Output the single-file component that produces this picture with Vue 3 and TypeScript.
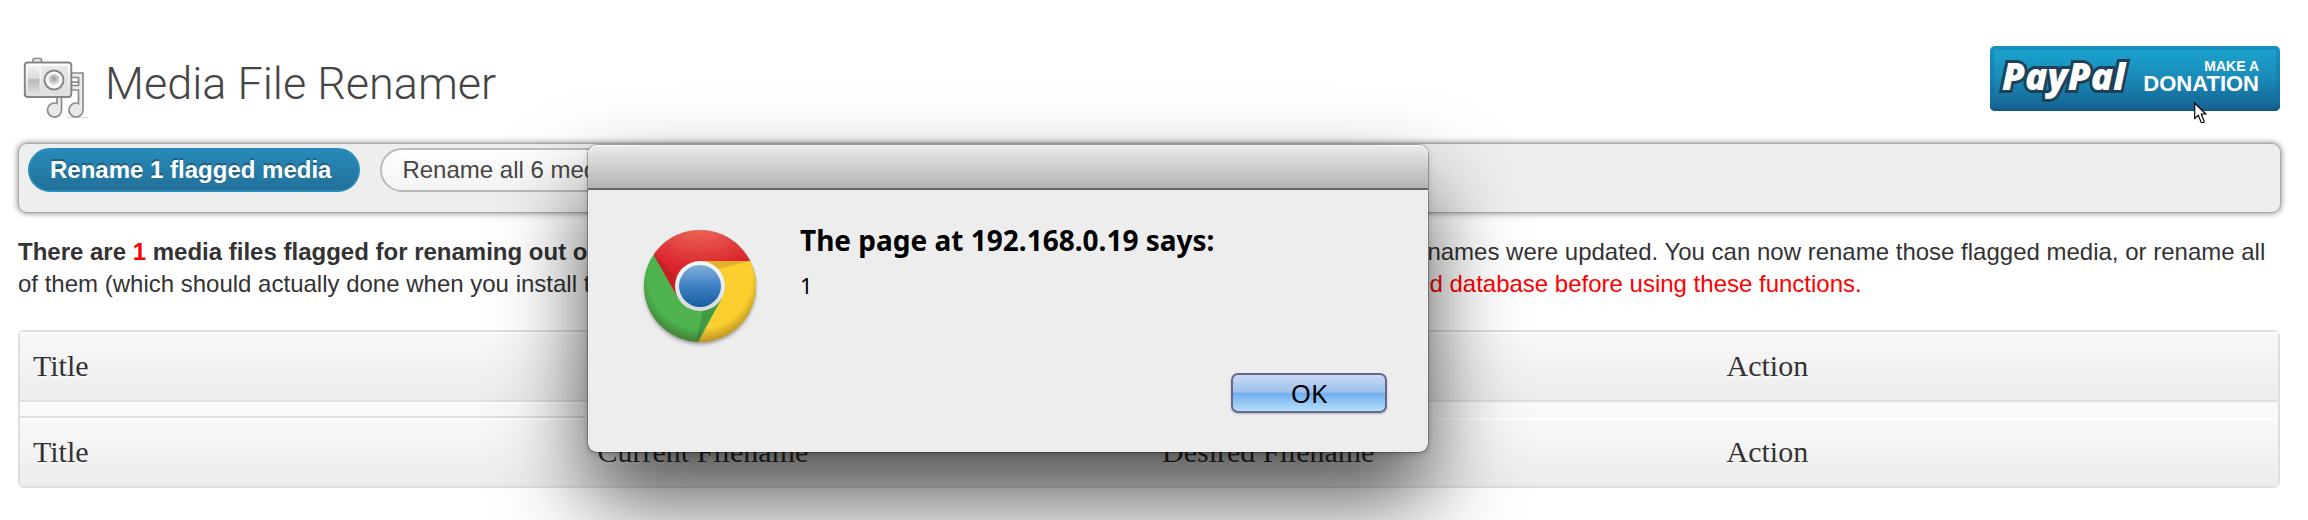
<script setup lang="ts">
import { ref } from 'vue'

const columns: string[] = ['Title', 'Current Filename', 'Desired Filename', 'Action']
const flagged = ref<number>(1)
const total = ref<number>(6)
</script>

<template>
  <div class="page">
    <header class="header">
      <svg class="media-icon" viewBox="20 54 68 66" aria-hidden="true">
        <defs>
          <linearGradient id="camBody" x1="0" y1="0" x2="0" y2="1">
            <stop offset="0" stop-color="#fff" />
            <stop offset="1" stop-color="#dedede" />
          </linearGradient>
          <linearGradient id="camGrip" x1="0" y1="0" x2="0" y2="1">
            <stop offset="0" stop-color="#f0f0f0" />
            <stop offset=".45" stop-color="#dcdcdc" />
            <stop offset=".5" stop-color="#b8b8b8" />
            <stop offset="1" stop-color="#dedede" />
          </linearGradient>
          <radialGradient id="camLens" cx=".5" cy=".4" r=".6">
            <stop offset="0" stop-color="#999" />
            <stop offset="1" stop-color="#e8e8e8" />
          </radialGradient>
        </defs>
        <path d="M67 117.500H89" stroke="#ddd" />
        <g fill="#e9e9e9" stroke="#8c8c8c" stroke-width="1.700">
          <path d="M70 73H83V110A7 7 0 1 1 78.500 103.500V90H70V85.500H78.500V82H70Z" />
          <path d="M78.500 77.500H71V82H78.500Z" fill="#fff" />
          <path d="M61.500 97V110A7 7 0 1 1 57 103.500V97Z" />
          <rect x="33" y="58.500" width="8.500" height="5" rx="1.500" />
        </g>
        <rect x="24.800" y="62.500" width="46.500" height="34.500" rx="3" fill="url(#camBody)" stroke="#858585" stroke-width="1.900" />
        <rect x="28" y="66" width="11.500" height="27.500" fill="url(#camGrip)" />
        <rect x="41" y="66" width="27" height="27.500" fill="#dcdcdc" opacity=".6" />
        <circle cx="54" cy="80" r="9.500" fill="#f7f7f7" stroke="#858585" stroke-width="1.900" />
        <circle cx="54" cy="79.500" r="5.500" fill="url(#camLens)" />
      </svg>
      <h1 class="title">Media File Renamer</h1>
      <a class="donate" href="#donate" aria-label="PayPal – Make a donation">
        <span class="paypal">PayPal</span>
        <span class="donate-text">
          <span class="donate-small">MAKE A</span>
          <span class="donate-big">DONATION</span>
        </span>
        <svg class="cursor" viewBox="0 0 13 22" aria-hidden="true">
          <path d="M.7 1V16.500L4.300 13.200L7.200 20.500H9.800L10 19L7.400 12H11.800Z" fill="#fff" stroke="#000" stroke-width="1.200" />
        </svg>
      </a>
    </header>

    <div class="toolbar">
      <button type="button" class="btn primary">Rename {{ flagged }} flagged media</button>
      <button type="button" class="btn">Rename all {{ total }} media</button>
    </div>

    <p class="notice">
      <b>There are <span class="red">{{ flagged }}</span> media files flagged for renaming out of {{ total }} in total.</b>
      Those are the files for which the associated media post titles, or filenames were updated. You can now rename those flagged media, or rename all of them (which should actually done when you install the plugin for the first time in a website with media). <span class="red">Please backup your files and database before using these functions.</span>
    </p>

    <table class="files">
      <thead>
        <tr><th v-for="c in columns" :key="c" scope="col">{{ c }}</th></tr>
      </thead>
      <tbody>
        <tr><td></td><td colspan="3"></td></tr>
      </tbody>
      <tfoot>
        <tr><th v-for="c in columns" :key="c" scope="col">{{ c }}</th></tr>
      </tfoot>
    </table>

    <div class="dialog" role="alertdialog" aria-labelledby="dlg-title" aria-describedby="dlg-msg">
      <div class="dialog-bar"></div>
      <div class="dialog-body">
        <svg class="chrome" viewBox="0 0 120 124" aria-hidden="true">
          <defs>
            <radialGradient id="gRed" cx=".5" cy="0" r=".6">
              <stop offset="0" stop-color="#ee6a5c" />
              <stop offset="1" stop-color="#da232b" />
            </radialGradient>
            <linearGradient id="gBlue" x1="0" y1="0" x2="0" y2="1">
              <stop offset="0" stop-color="#7fb0dc" />
              <stop offset=".55" stop-color="#3a7dc0" />
              <stop offset="1" stop-color="#14609f" />
            </linearGradient>
            <linearGradient id="gRing" x1="0" y1="0" x2="0" y2="1">
              <stop offset="0" stop-color="#f8f8f8" />
              <stop offset="1" stop-color="#d8dadd" />
            </linearGradient>
            <radialGradient id="gShade" cx=".5" cy=".42" r=".58">
              <stop offset=".8" stop-color="#000" stop-opacity="0" />
              <stop offset="1" stop-color="#400" stop-opacity=".3" />
            </radialGradient>
            <filter id="soft" x="-20%" y="-20%" width="140%" height="140%">
              <feGaussianBlur stdDeviation="2" />
            </filter>
            <clipPath id="disc"><circle cx="60" cy="60" r="56" /></clipPath>
          </defs>
          <circle cx="60" cy="62.500" r="55" fill="#000" opacity=".45" filter="url(#soft)" />
          <g clip-path="url(#disc)">
            <rect width="120" height="120" fill="#4fb34e" />
            <path d="M60 35H120V120H56L81.700 72.500Z" fill="#fbcf2f" />
            <path d="M60 35H110L78 43Z" fill="#e3b02c" />
            <path d="M81.700 72.500L56 117L63 84Z" fill="#429a45" />
            <path d="M0 0H120V35H60L38.300 72.500L13.500 28.500Z" fill="url(#gRed)" />
            <path d="M13.500 28.500L36 68L38 52Z" fill="#bd1f27" opacity=".7" />
            <circle cx="60" cy="60" r="56" fill="url(#gShade)" />
          </g>
          <circle cx="60" cy="60" r="25" fill="url(#gRing)" />
          <circle cx="60" cy="60" r="21" fill="url(#gBlue)" />
        </svg>
        <div class="dialog-text">
          <h2 id="dlg-title">The page at 192.168.0.19 says:</h2>
          <p id="dlg-msg">{{ flagged }}</p>
        </div>
      </div>
      <div class="dialog-actions">
        <button type="button" class="ok">OK</button>
      </div>
    </div>
  </div>
</template>

<style>
body {
  margin: 0;
  background: #fff;
}
</style>

<style scoped>
.page {
  position: relative;
  box-sizing: border-box;
  min-height: 100vh;
  padding: 46px 28px 32px 18px;
  overflow: hidden;
  font-family: "Liberation Sans", Arial, sans-serif;
  font-size: 24px;
  color: #333;
}
.header {
  display: flex;
  align-items: flex-start;
  margin-bottom: 32px;
}
.media-icon {
  width: 68px;
  height: 66px;
  margin: 8px 0 -9px 2px;
}
.title {
  margin: 12px auto 0 17px;
  font-family: Roboto, "Liberation Sans", sans-serif;
  font-weight: 300;
  font-size: 45px;
  line-height: 52px;
  color: #464646;
}
.donate {
  position: relative;
  display: flex;
  box-sizing: border-box;
  justify-content: space-between;
  width: 290px;
  height: 65px;
  padding: 12px 21px 0 12px;
  border-radius: 5px;
  background: linear-gradient(#1ba5d0, #1a8ab8 50%, #14608f);
  box-shadow: inset 0 0 0 4px rgba(20, 110, 160, .35), inset 0 -3px 0 #125583;
  color: #fff;
  text-decoration: none;
}
.paypal {
  font-family: "Open Sans", "Noto Sans", sans-serif;
  font-style: italic;
  font-weight: 800;
  font-size: 37px;
  line-height: 36px;
  -webkit-text-stroke: 6px #1d4257;
  paint-order: stroke fill;
}
.donate-text {
  display: flex;
  flex-direction: column;
  align-items: flex-end;
  padding-top: 1px;
  font-weight: 700;
}
.donate-small {
  font-size: 14px;
  line-height: 14px;
}
.donate-big {
  font-size: 22px;
  line-height: 22px;
}
.cursor {
  position: absolute;
  left: 204px;
  top: 56px;
  width: 13px;
  height: 22px;
}
.toolbar {
  display: flex;
  gap: 20px;
  box-sizing: border-box;
  min-height: 70px;
  margin-right: -1px;
  padding: 4px 9px;
  align-items: flex-start;
  border: 1px solid #a9a9a9;
  border-radius: 9px;
  background: #eee;
  box-shadow: 0 0 6px rgba(0, 0, 0, .5);
}
.btn {
  height: 44px;
  padding: 0 27px 0 20px;
  border: 2px solid #bbb;
  border-radius: 22px;
  background: linear-gradient(#fefefe, #f4f4f4);
  font: 24px/40px "Liberation Sans", Arial, sans-serif;
  color: #464646;
}
.btn.primary {
  border-color: #298cba;
  background: linear-gradient(#278ab7, #22709a);
  font-weight: 700;
  color: #fff;
  text-shadow: 0 -2px 0 rgba(0, 0, 0, .3);
}
.notice {
  margin: 23px 0 30px;
  line-height: 32px;
}
.red {
  color: #f00;
}
.files {
  width: 100%;
  table-layout: fixed;
  border: 2px solid #dfdfdf;
  border-radius: 6px;
  border-collapse: separate;
  border-spacing: 0;
  background: #f9f9f9;
  font-family: "Liberation Serif", "Times New Roman", serif;
  font-size: 30px;
}
.files th {
  box-sizing: border-box;
  height: 68px;
  padding: 0 13px;
  background: linear-gradient(#f9f9f9, #ececec);
  box-shadow: inset 0 2px 0 #fff;
  font-weight: 400;
  text-align: left;
  text-shadow: 0 2px 0 rgba(255, 255, 255, .8);
}
.files thead th {
  height: 70px;
  border-bottom: 2px solid #dfdfdf;
}
.files td {
  box-sizing: border-box;
  height: 16px;
  padding: 0;
}
.files td:first-child {
  border-top: 2px solid #fff;
  border-bottom: 2px solid #dfdfdf;
}
.dialog {
  position: absolute;
  left: 588px;
  top: 145px;
  width: 840px;
  border-radius: 9px;
  background: #ededed;
  box-shadow: 0 0 0 1px rgba(0, 0, 0, .25), 0 2px 6px rgba(0, 0, 0, .2), 0 46px 88px rgba(0, 0, 0, .68);
  font-family: "Noto Sans", "Open Sans", sans-serif;
  color: #000;
}
.dialog-bar {
  height: 43px;
  border-bottom: 2px solid #68686a;
  border-radius: 9px 9px 0 0;
  background: linear-gradient(#ececec, #b3b3b3);
  box-shadow: inset 0 1px 0 #f6f6f6;
}
.dialog-body {
  display: flex;
  gap: 40px;
  padding: 36px 52px 0;
}
.chrome {
  width: 120px;
  height: 124px;
}
.dialog-text h2 {
  margin: 0 0 14px;
  font-size: 28px;
  line-height: 28px;
}
.dialog-text p {
  margin: 0;
  font-size: 22px;
  line-height: 34px;
}
.dialog-actions {
  display: flex;
  justify-content: flex-end;
  padding: 23px 41px 39px;
}
.ok {
  width: 156px;
  height: 40px;
  padding: 0;
  border: 2px solid #66678f;
  border-radius: 7px;
  background: linear-gradient(#c8d8f2, #9cc2ef 48%, #6fadee 50%, #b6e0fa);
  box-shadow: 0 1px 2px rgba(0, 0, 0, .25);
  font: 26px/34px "Noto Sans", "Open Sans", sans-serif;
  color: #000;
}
</style>
